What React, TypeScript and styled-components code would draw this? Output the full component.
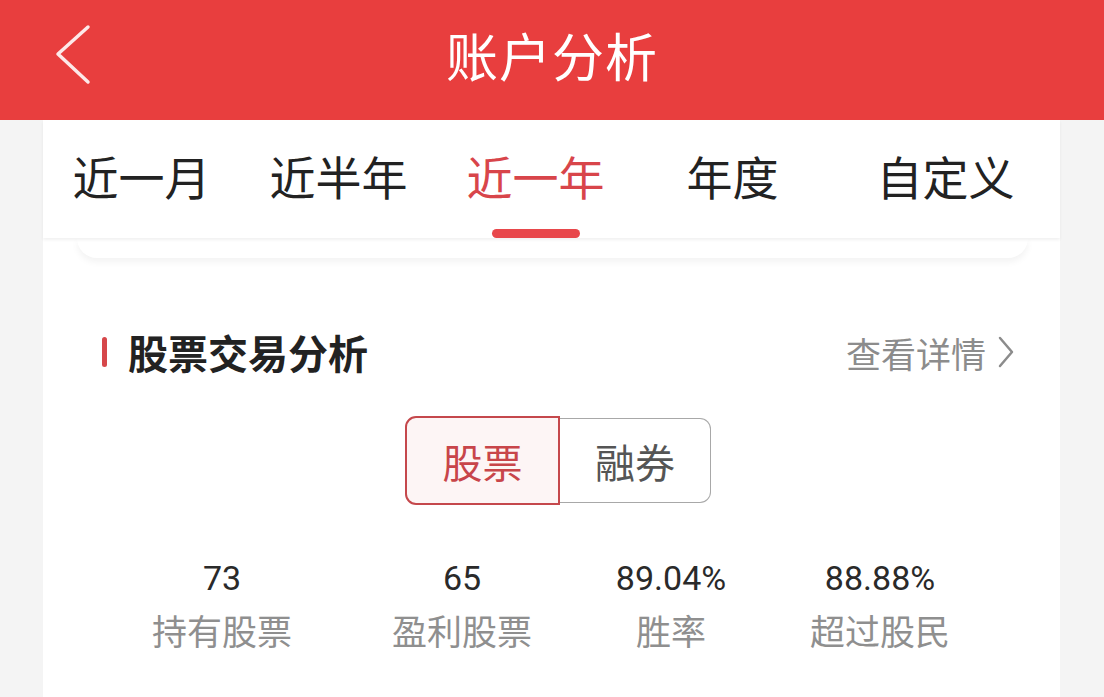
import styled, { createGlobalStyle } from 'styled-components';

const GlobalStyle = createGlobalStyle`
  html, body {
    margin: 0;
    padding: 0;
    background: #f4f4f4;
  }
  body {
    font-family: "Noto Sans CJK SC", "Noto Sans", sans-serif;
  }
`;

const Page = styled.div`
  width: 1104px;
  height: 697px;
  overflow: hidden;
  background: #f4f4f4;
  display: flex;
  flex-direction: column;
`;

const Header = styled.header`
  height: 120px;
  flex: none;
  background: #e83e3e;
  display: flex;
  align-items: center;
  justify-content: center;
  position: relative;
`;

const BackButton = styled.button`
  position: absolute;
  left: 50px;
  top: 20px;
  width: 48px;
  height: 70px;
  padding: 0;
  border: 0;
  background: transparent;
  cursor: pointer;
`;

const Title = styled.h1`
  margin: 0;
  color: #fff;
  font-size: 52px;
  font-weight: 400;
  letter-spacing: 1px;
  line-height: 1;
  transform: translateY(-5px);
`;

const Panel = styled.main`
  width: 1017px;
  margin-left: 43px;
  flex: 1;
  background: #fff;
  display: flex;
  flex-direction: column;
`;

const TabBar = styled.nav`
  height: 118px;
  flex: none;
  display: grid;
  grid-template-columns: repeat(4, 197px) 1fr;
  background: #fff;
  position: relative;
  z-index: 2;
  box-shadow: 0 2px 3px rgba(0, 0, 0, 0.06);
`;

const Tab = styled.div<{ $active?: boolean }>`
  position: relative;
  display: flex;
  align-items: center;
  justify-content: center;
  font-size: 46px;
  line-height: 1;
  color: ${(p) => (p.$active ? '#d8454a' : '#222')};
  padding-bottom: 8px;

  &::after {
    content: '';
    display: ${(p) => (p.$active ? 'block' : 'none')};
    position: absolute;
    bottom: 0;
    left: 50%;
    width: 88px;
    height: 9px;
    margin-left: -44px;
    border-radius: 5px;
    background: #e8474b;
  }
`;

const TuckedCard = styled.div`
  height: 20px;
  margin: 0 32px 0 34px;
  background: #fff;
  border-radius: 0 0 28px 28px;
  box-shadow: 0 4px 7px rgba(0, 0, 0, 0.05);
  position: relative;
  z-index: 1;
`;

const Content = styled.section`
  padding: 74px 46px 0 59px;
  display: flex;
  flex-direction: column;
`;

const SectionHead = styled.div`
  height: 40px;
  display: flex;
  align-items: center;
`;

const Accent = styled.span`
  width: 5px;
  height: 30px;
  border-radius: 3px;
  background: #d6474a;
  margin-right: 21px;
`;

const SectionTitle = styled.h2`
  margin: 0;
  font-size: 40px;
  font-weight: 700;
  color: #222;
  line-height: 1;
  flex: 1;
`;

const MoreLink = styled.a`
  display: flex;
  align-items: center;
  gap: 12px;
  font-size: 35px;
  color: #8c8c8c;
  line-height: 1;
`;

const Segmented = styled.div`
  display: flex;
  align-self: center;
  margin-top: 44px;
`;

const Segment = styled.div<{ $active?: boolean }>`
  width: ${(p) => (p.$active ? '151px' : '150px')};
  height: ${(p) => (p.$active ? '85px' : '83px')};
  margin-top: ${(p) => (p.$active ? '0' : '2px')};
  display: flex;
  align-items: center;
  justify-content: center;
  font-size: 40px;
  line-height: 1;
  color: ${(p) => (p.$active ? '#c8454a' : '#555')};
  background: ${(p) => (p.$active ? '#fdf5f5' : '#fff')};
  border: ${(p) => (p.$active ? '2px solid #c5484c' : '1px solid #a8a8a8')};
  border-left: ${(p) => (p.$active ? '2px solid #c5484c' : '0')};
  border-radius: ${(p) => (p.$active ? '11px 0 0 11px' : '0 11px 11px 0')};
`;

const Stats = styled.div`
  margin-top: 53px;
  display: grid;
  grid-template-columns: 240px 240px 178px 240px;
`;

const Stat = styled.div`
  display: flex;
  flex-direction: column;
  align-items: center;
`;

const StatValue = styled.div`
  font-family: Roboto, "Noto Sans", sans-serif;
  font-size: 34px;
  line-height: 40px;
  color: #2a2a2a;
`;

const StatLabel = styled.div`
  margin-top: 14px;
  font-size: 35px;
  line-height: 1;
  color: #8f8f8f;
`;

const tabs = ['近一月', '近半年', '近一年', '年度', '自定义'];

const stats = [
  { value: '73', label: '持有股票' },
  { value: '65', label: '盈利股票' },
  { value: '89.04%', label: '胜率' },
  { value: '88.88%', label: '超过股民' },
];

export default function App() {
  return (
    <Page>
      <GlobalStyle />
      <Header>
        <BackButton aria-label="返回">
          <svg width="48" height="70" viewBox="0 0 48 70">
            <path d="M38 7 L8 34 L38 62" fill="none" stroke="#fde9e9" strokeWidth="3.5" strokeLinecap="round" strokeLinejoin="round" />
          </svg>
        </BackButton>
        <Title>账户分析</Title>
      </Header>
      <Panel>
        <TabBar>
          {tabs.map((t) => (
            <Tab key={t} $active={t === '近一年'}>{t}</Tab>
          ))}
        </TabBar>
        <TuckedCard />
        <Content>
          <SectionHead>
            <Accent />
            <SectionTitle>股票交易分析</SectionTitle>
            <MoreLink>
              查看详情
              <svg width="16" height="32" viewBox="0 0 16 32">
                <path d="M2 2 L14 16 L2 30" fill="none" stroke="#8c8c8c" strokeWidth="2.5" strokeLinecap="round" strokeLinejoin="round" />
              </svg>
            </MoreLink>
          </SectionHead>
          <Segmented>
            <Segment $active>股票</Segment>
            <Segment>融券</Segment>
          </Segmented>
          <Stats>
            {stats.map((s) => (
              <Stat key={s.label}>
                <StatValue>{s.value}</StatValue>
                <StatLabel>{s.label}</StatLabel>
              </Stat>
            ))}
          </Stats>
        </Content>
      </Panel>
    </Page>
  );
}
